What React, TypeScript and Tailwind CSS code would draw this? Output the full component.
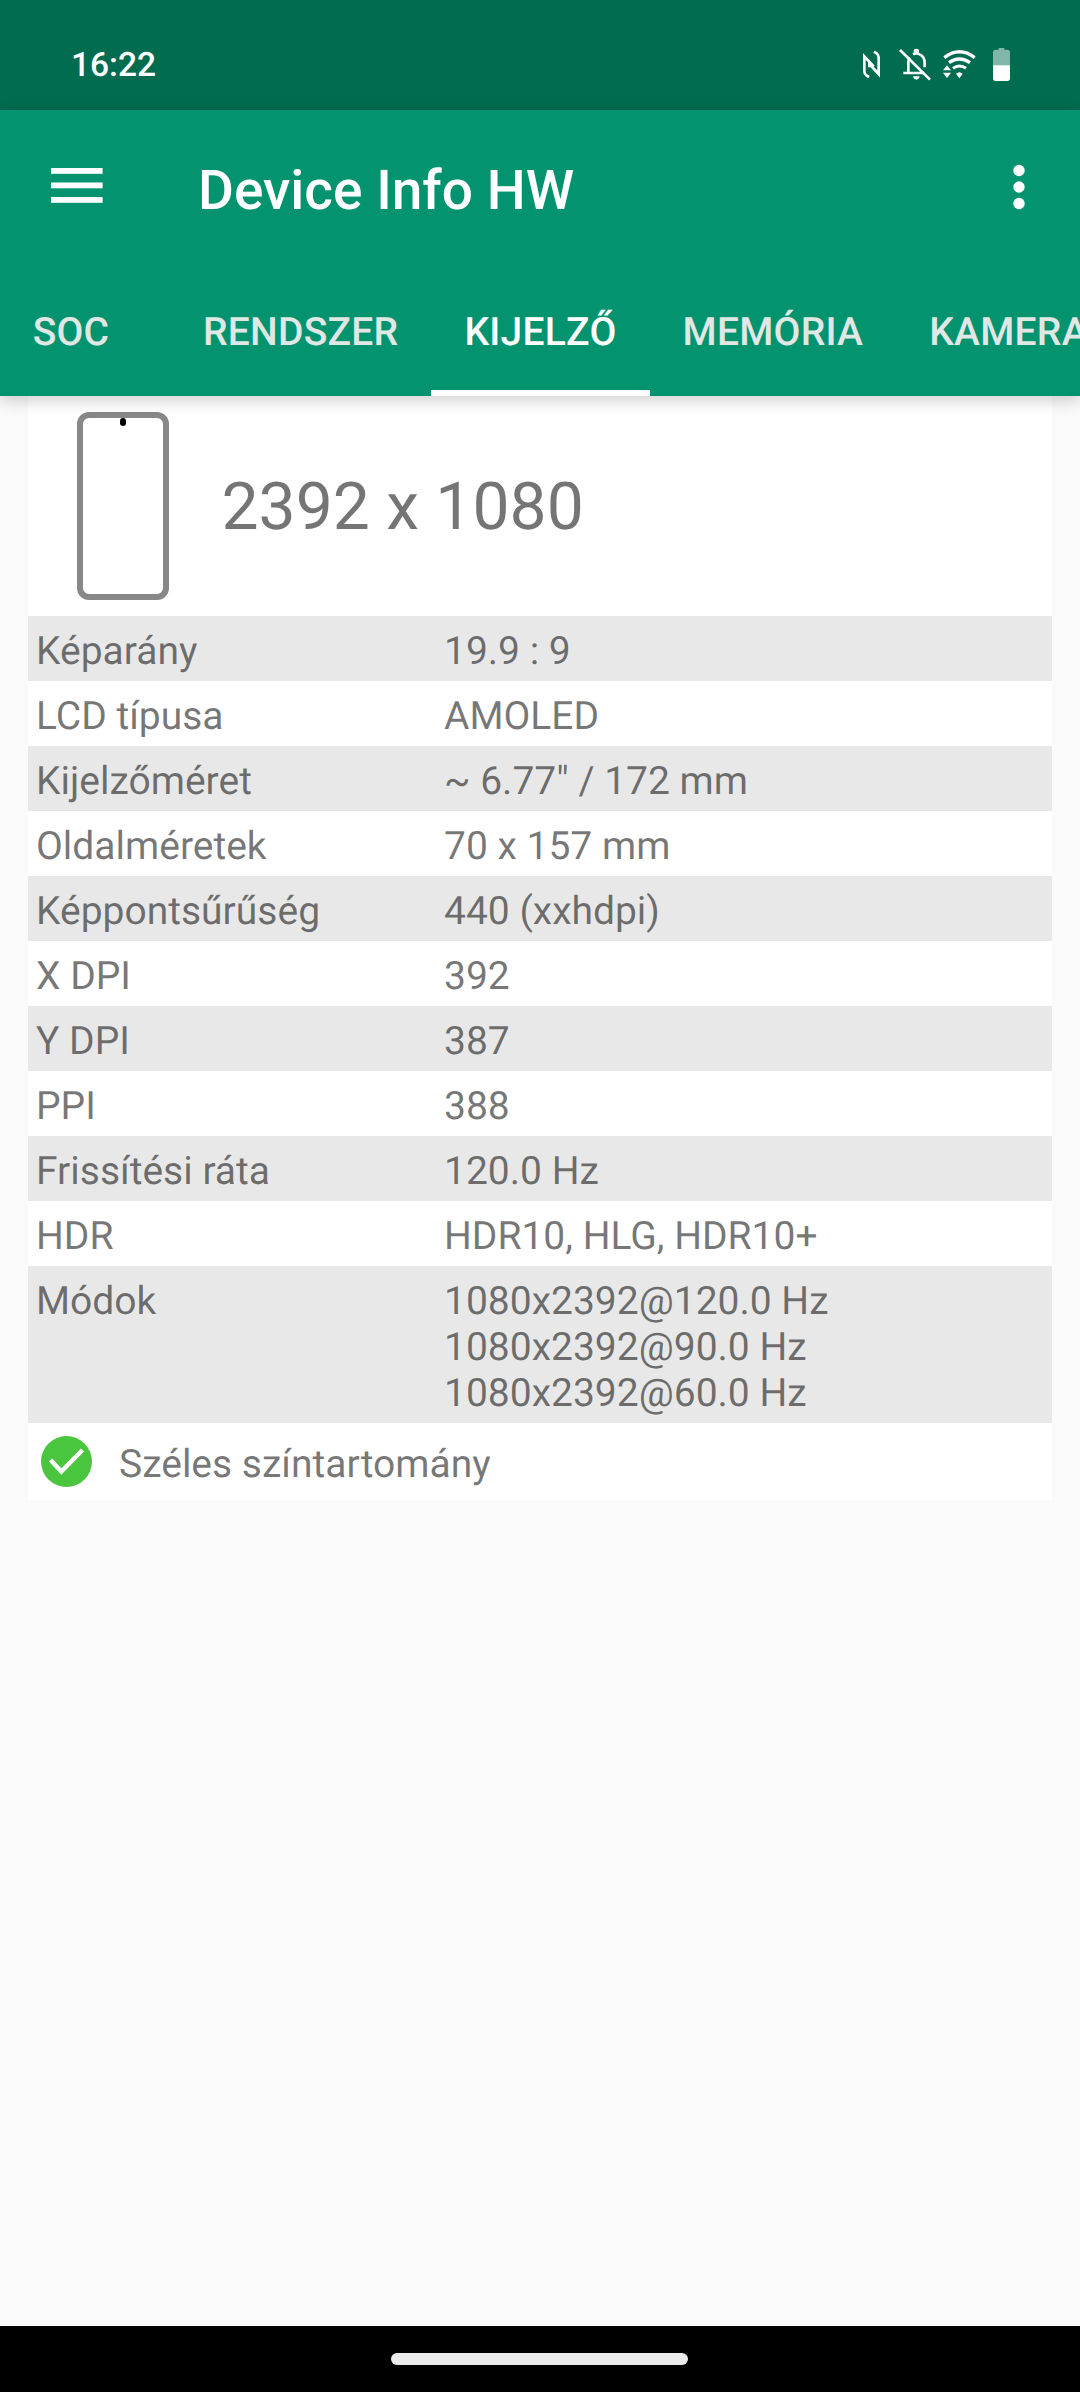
import type { ReactNode } from "react"

type SpecRow = {
  label: string
  values: string[]
}

const tabs = ["SOC", "RENDSZER", "KIJELZŐ", "MEMÓRIA", "KAMERA"]
const activeTab = "KIJELZŐ"

const specs: SpecRow[] = [
  { label: "Képarány", values: ["19.9 : 9"] },
  { label: "LCD típusa", values: ["AMOLED"] },
  { label: "Kijelzőméret", values: ['~ 6.77" / 172 mm'] },
  { label: "Oldalméretek", values: ["70 x 157 mm"] },
  { label: "Képpontsűrűség", values: ["440 (xxhdpi)"] },
  { label: "X DPI", values: ["392"] },
  { label: "Y DPI", values: ["387"] },
  { label: "PPI", values: ["388"] },
  { label: "Frissítési ráta", values: ["120.0 Hz"] },
  { label: "HDR", values: ["HDR10, HLG, HDR10+"] },
  {
    label: "Módok",
    values: ["1080x2392@120.0 Hz", "1080x2392@90.0 Hz", "1080x2392@60.0 Hz"],
  },
]

export default function App() {
  return (
    <div className="flex h-[2392px] w-[1080px] flex-col overflow-hidden bg-[#fafafa] font-['Roboto',sans-serif] text-black/54 [text-rendering:geometricPrecision]">
      <StatusBar />

      <header className="relative z-10 h-[286px] shrink-0 bg-[#03946f] text-white shadow-[0_4px_16px_rgba(0,0,0,0.2)]">
        <Toolbar title="Device Info HW" />
        <TabBar />
      </header>

      <main className="mx-7 grow">
        <section className="bg-white">
          <div className="flex h-[220px] items-start pt-4 pl-[49px]">
            <PhoneOutline />
            <p className="mt-[56px] ml-[52.5px] text-[66px] leading-[80px]">
              2392 x 1080
            </p>
          </div>

          <dl>
            {specs.map((row) => (
              <Spec key={row.label} {...row} />
            ))}
          </dl>

          <Feature>Széles színtartomány</Feature>
        </section>
      </main>

      <footer className="flex h-[66px] shrink-0 items-center justify-center bg-black">
        <div className="mr-[2px] h-[12px] w-[297px] rounded-full bg-[#ebebeb]" />
      </footer>
    </div>
  )
}

function StatusBar() {
  return (
    <div className="flex h-[110px] shrink-0 items-start justify-between bg-[#026c50] text-white">
      <span className="mt-[46px] ml-[71px] text-[33.5px] leading-[40px] font-medium">
        16:22
      </span>
      <StatusIcons />
    </div>
  )
}

function StatusIcons() {
  return (
    <svg
      className="mt-[30px] mr-10 h-[70px] w-[200px]"
      viewBox="0 0 600 210"
      fill="none"
      stroke="white"
    >
      {/* nfc */}
      <g strokeWidth="8">
        <path d="M87 141 L79 136 Q73 132 73 124 V79 L101 109" />
        <path d="M102 65 L110 70 Q116 74 116 82 V132 L88 102 V112" />
      </g>

      {/* muted bell */}
      <path
        d="M190 129 H252 M205 127 V97 Q205 88 209 82 M219 73 Q229 68 239 73 Q254 80 254 98 V112"
        strokeWidth="8"
      />
      <path d="M180 60 L270 149" strokeWidth="8" />
      <path d="M221 68 V63 Q221 56 229 56 Q237 56 237 63 V68 Z" fill="white" stroke="none" />
      <path d="M219 139 H239 Q237 149 229 149 Q221 149 219 139 Z" fill="white" stroke="none" />

      {/* wifi with traffic arrows */}
      <path d="M313 83 Q358 48 404 83" strokeWidth="10" />
      <path d="M327 98 Q358 76 390 98" strokeWidth="10" />
      <path d="M339 115 Q358 101 378 115" strokeWidth="9" />
      <g fill="white" stroke="none">
        <path d="M348 131 Q358 122 368 131 L358 145 Z" />
        <path d="M309 121 L321 106 L333 121 Z" />
        <path d="M309 128 H333 L321 144 Z" />
      </g>

      {/* battery */}
      <g fill="white" stroke="none">
        <path
          d="M459 107 V67 Q459 59 467 59 H476 V54 H493 V59 H502 Q510 59 510 67 V107 Z"
          fillOpacity="0.5"
        />
        <path d="M459 106 H510 V145 Q510 153 502 153 H467 Q459 153 459 145 Z" />
      </g>
    </svg>
  )
}

function Toolbar({ title }: { title: string }) {
  return (
    <div className="flex h-[154px] items-start">
      <svg className="mt-[58px] ml-[51px] h-[35px] w-[52px]" viewBox="0 0 52 35" fill="white">
        <rect width="51.6" height="5.8" />
        <rect y="14.5" width="51.6" height="5.8" />
        <rect y="29" width="51.6" height="5.8" />
      </svg>
      <h1 className="mt-[48px] ml-[95px] text-[55px] leading-[66px] font-medium">
        {title}
      </h1>
      <svg className="mt-[54px] mr-[55px] ml-auto h-[46px] w-[12px]" viewBox="0 0 12 46" fill="white">
        <circle cx="6" cy="6.5" r="5.7" />
        <circle cx="6" cy="23" r="5.7" />
        <circle cx="6" cy="39.5" r="5.7" />
      </svg>
    </div>
  )
}

function TabBar() {
  return (
    // the strip is scrolled, so the first tab starts off screen
    <nav className="h-[132px] overflow-hidden">
      <ul className="-ml-[28px] flex h-full w-max">
        {tabs.map((tab) => (
          <li
            key={tab}
            className={`flex min-w-[198px] justify-center border-b-[6px] px-[33px] pt-[45px] text-[39px] leading-[46px] font-medium tracking-[0.25px] ${
              tab === activeTab
                ? "border-white text-white"
                : "border-transparent text-[#e0e7e5]"
            }`}
          >
            {tab}
          </li>
        ))}
      </ul>
    </nav>
  )
}

function PhoneOutline() {
  return (
    <div className="flex h-[188px] w-[92px] justify-center rounded-[12px] border-[6px] border-[#888]">
      <div className="h-[8px] w-[6px] rounded-full bg-black" />
    </div>
  )
}

function Spec({ label, values }: SpecRow) {
  return (
    <div className="flex pt-3 pb-[7px] pl-2 text-[39px] leading-[46px] odd:bg-[#e8e8e8]">
      <dt className="w-[408px]">{label}</dt>
      <dd>
        {values.map((value) => (
          <div key={value}>{value}</div>
        ))}
      </dd>
    </div>
  )
}

function Feature({ children }: { children: ReactNode }) {
  return (
    <div className="flex h-[77px] items-center pl-[13px] text-[39px] leading-[46px]">
      <svg className="h-[51px] w-[51px]" viewBox="0 0 51 51" fill="none">
        <circle cx="25.5" cy="25.5" r="25.5" fill="#49c53e" />
        <path d="M9.5 24 L20.3 35.5 L41.5 14" stroke="white" strokeWidth="4.5" />
      </svg>
      <span className="mt-[5px] ml-[27px]">{children}</span>
    </div>
  )
}
